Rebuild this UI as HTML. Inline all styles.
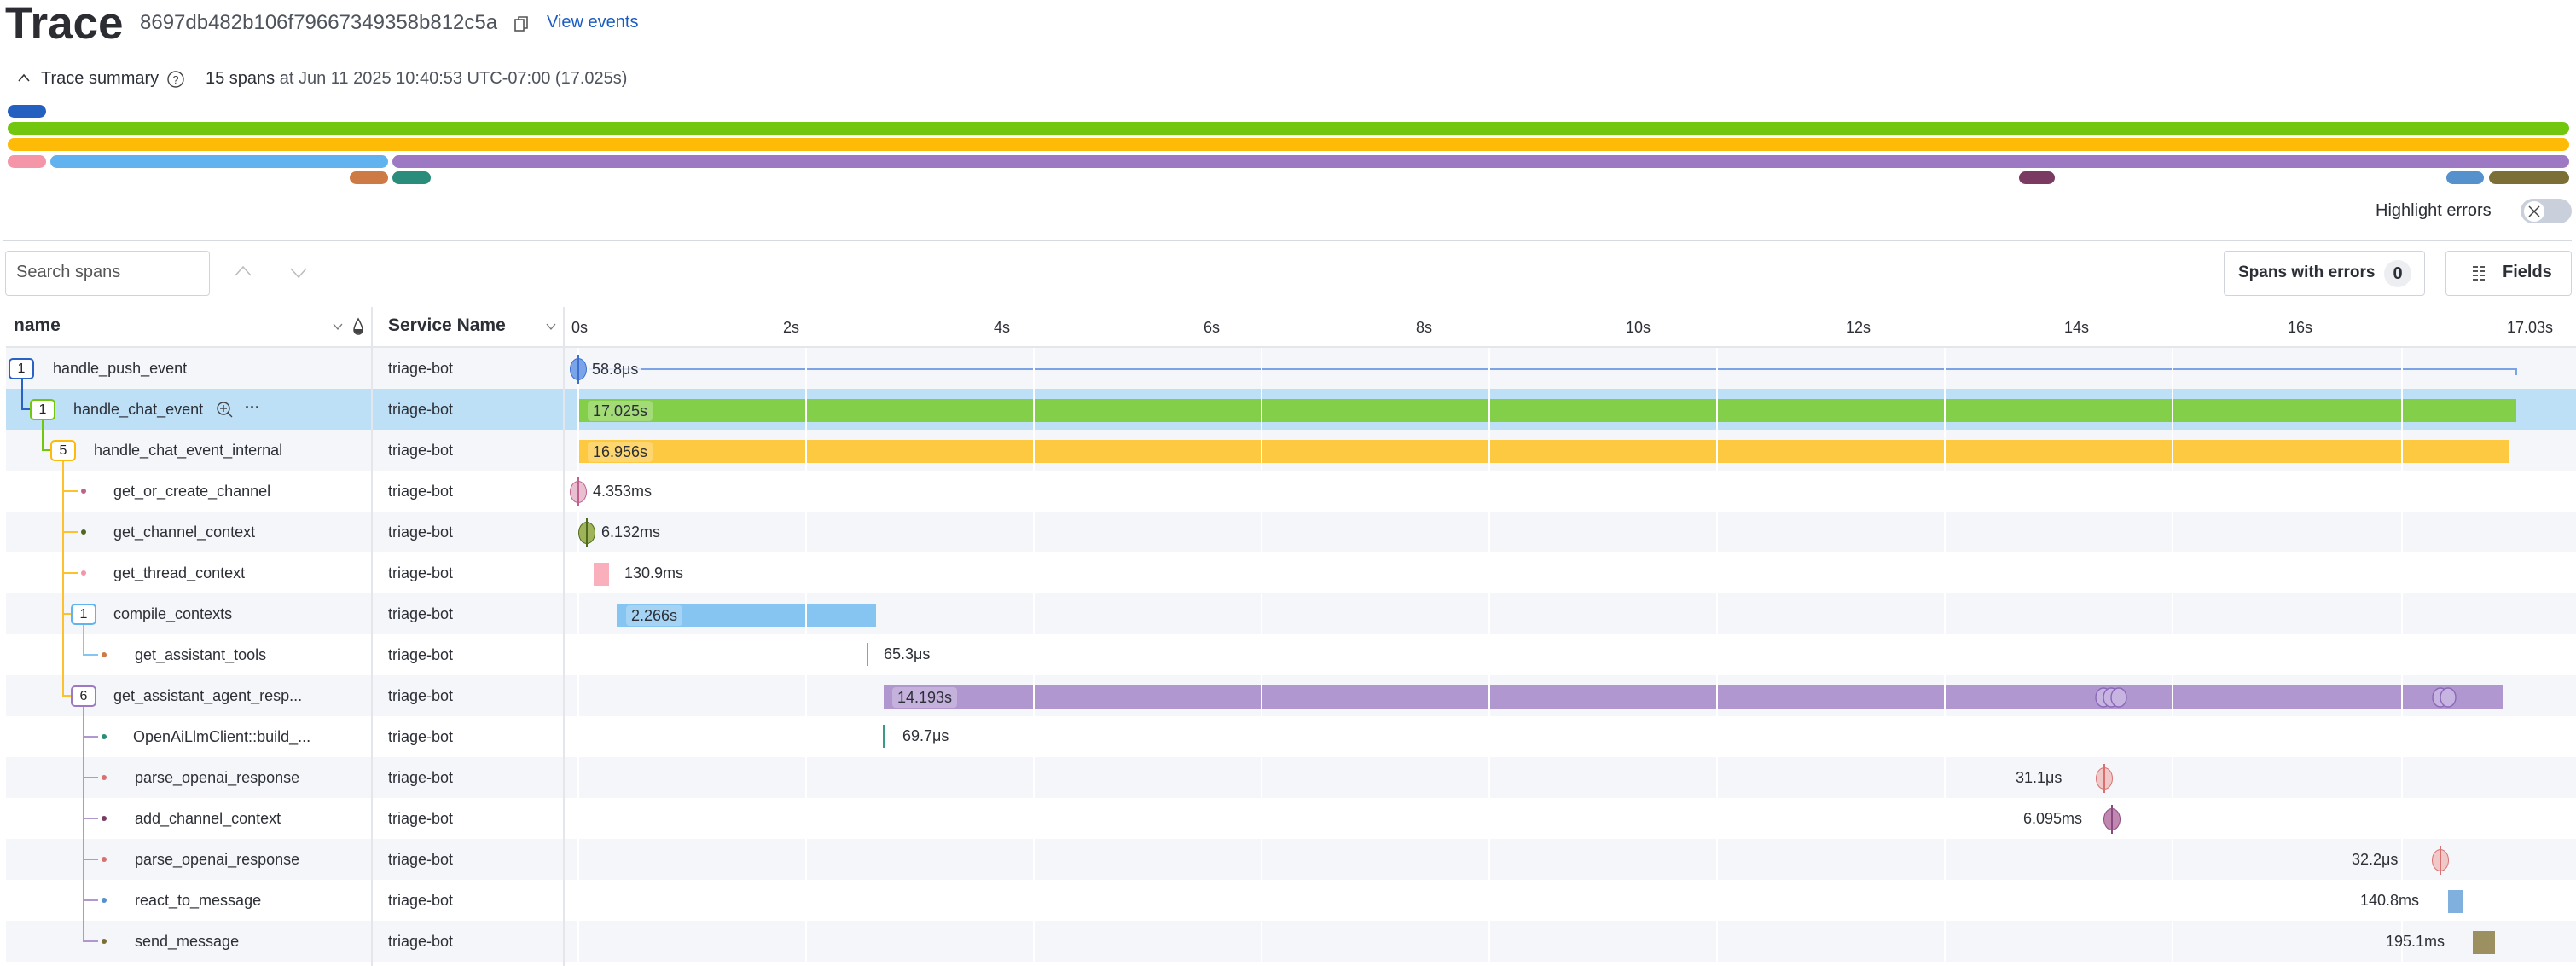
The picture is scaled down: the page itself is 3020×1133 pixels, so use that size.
<!DOCTYPE html>
<html><head><meta charset="utf-8"><style>
*{margin:0;padding:0;box-sizing:border-box}
body{width:3020px;height:1133px;overflow:hidden;background:#fff;font-family:"Liberation Sans",sans-serif;color:#2c2f36;position:relative}
.a{position:absolute;white-space:nowrap}
.mm{position:absolute;height:15px;border-radius:8px}
.row{position:absolute;left:7px;width:3013px;height:48px}
.g{background:#f5f6fa}
.sel{background:#bde0f7}
.t{position:absolute;font-size:18px;line-height:48px;white-space:nowrap;color:#2c2f36}
.badge{position:absolute;width:30px;height:25px;border:2px solid;border-radius:5px;background:#fff;font-size:16px;text-align:center;line-height:21px;color:#222}
.vl{position:absolute;width:2px}
.hl{position:absolute;height:2px}
.dot{position:absolute;width:6px;height:6px;border-radius:3px}
.bar{position:absolute;height:27px}
.bl{position:absolute;font-size:18px;line-height:24px;padding:0 6px;border-radius:4px;background:rgba(255,255,255,.25);color:#2c2f36}
.lab{position:absolute;font-size:18px;line-height:24px;color:#2c2f36;white-space:nowrap}
.mk{position:absolute;width:20px;height:26px;border-radius:50%;border:1.5px solid}
.mk:after{content:"";position:absolute;left:8px;top:-5px;width:1.5px;height:34px;background:var(--c)}
.grid{position:absolute;top:408px;width:1.5px;height:725px;background:#fff}
.tick{position:absolute;top:372px;font-size:18px;line-height:24px}
</style></head><body>

<div class="a" style="left:6px;top:-2px;font-size:53px;font-weight:bold;line-height:60px;color:#2b2d33">Trace</div>
<div class="a" style="left:164px;top:13px;font-size:24px;color:#4e535c">8697db482b106f79667349358b812c5a</div>
<svg class="a" style="left:600px;top:17px" width="22" height="22" viewBox="0 0 22 22"><rect x="4" y="6" width="10" height="13" fill="none" stroke="#555" stroke-width="1.6"/><path d="M8 6V3h10v13h-4" fill="none" stroke="#555" stroke-width="1.6"/></svg>
<div class="a" style="left:641px;top:15px;font-size:20px;color:#1a5cc2">View events</div>

<svg class="a" style="left:20px;top:85px" width="16" height="12"><path d="M2 10L8 3l6 7" fill="none" stroke="#333" stroke-width="1.6"/></svg>
<div class="a" style="left:48px;top:81px;font-size:20px;color:#2c2f36">Trace summary</div>
<svg class="a" style="left:195px;top:82px" width="22" height="22"><circle cx="11" cy="11" r="9" fill="none" stroke="#444" stroke-width="1.4"/><text x="11" y="16" font-size="13" text-anchor="middle" fill="#444" font-family="Liberation Sans">?</text></svg>
<div class="a" style="left:241px;top:81px;font-size:20px;color:#2c2f36">15 spans <span style="color:#4e535c">at Jun 11 2025 10:40:53 UTC-07:00 (17.025s)</span></div>

<div class="mm" style="left:9px;top:123px;width:45px;background:#2360c0"></div>
<div class="mm" style="left:9px;top:143px;width:3003px;background:#72c70e"></div>
<div class="mm" style="left:9px;top:162px;width:3003px;background:#fdba06"></div>
<div class="mm" style="left:9px;top:182px;width:45px;background:#f595a8"></div>
<div class="mm" style="left:59px;top:182px;width:396px;background:#60b3ee"></div>
<div class="mm" style="left:460px;top:182px;width:2552px;background:#9d78c3"></div>
<div class="mm" style="left:410px;top:201px;width:45px;background:#cd7a44"></div>
<div class="mm" style="left:460px;top:201px;width:45px;background:#2a8c7a"></div>
<div class="mm" style="left:2367px;top:201px;width:42px;background:#7a3a62"></div>
<div class="mm" style="left:2868px;top:201px;width:44px;background:#5591cd"></div>
<div class="mm" style="left:2918px;top:201px;width:94px;background:#7c6f35"></div>

<div class="a" style="left:2785px;top:236px;font-size:20px;color:#2c2f36">Highlight errors</div>
<div class="a" style="left:2955px;top:233px;width:60px;height:29px;border-radius:15px;background:#c9d0dc"></div>
<div class="a" style="left:2959px;top:236px;width:24px;height:24px;border-radius:12px;background:#fff"></div>
<svg class="a" style="left:2963px;top:240px" width="16" height="16"><path d="M2 2l12 12M14 2L2 14" stroke="#444" stroke-width="1.5"/></svg>

<div class="a" style="left:3px;top:281px;width:3012px;height:2px;background:#d5d9e0"></div>

<div class="a" style="left:6px;top:294px;width:240px;height:53px;border:1.5px solid #cfd4dc;border-radius:4px"></div>
<div class="a" style="left:19px;top:308px;font-size:20px;color:#555">Search spans</div>
<svg class="a" style="left:274px;top:310px" width="22" height="16"><path d="M2 13L11 3l9 10" fill="none" stroke="#bbb" stroke-width="1.5"/></svg>
<svg class="a" style="left:339px;top:312px" width="22" height="16"><path d="M2 3l9 10 9-10" fill="none" stroke="#bbb" stroke-width="1.5"/></svg>

<div class="a" style="left:2607px;top:294px;width:236px;height:53px;border:1.5px solid #cfd4dc;border-radius:4px"></div>
<div class="a" style="left:2624px;top:309px;font-size:19px;font-weight:bold;color:#2c2f36">Spans with errors</div>
<div class="a" style="left:2795px;top:305px;width:32px;height:32px;border-radius:16px;background:#eceef2;font-size:20px;font-weight:bold;text-align:center;line-height:32px">0</div>
<div class="a" style="left:2867px;top:294px;width:148px;height:53px;border:1.5px solid #cfd4dc;border-radius:4px"></div>
<svg class="a" style="left:2898px;top:311px" width="18" height="20"><path d="M1 2h16M1 7h16M1 12h16M1 17h16" stroke="#555" stroke-width="2" stroke-dasharray="6 2"/></svg>
<div class="a" style="left:2934px;top:308px;font-size:20px;font-weight:bold;color:#2c2f36">Fields</div>

<!-- header -->
<div class="a" style="left:16px;top:370px;font-size:21px;font-weight:bold;color:#2c2f36">name</div>
<svg class="a" style="left:390px;top:378px" width="12" height="10"><path d="M1 2l5 6 5-6" fill="none" stroke="#777" stroke-width="1.3"/></svg>
<svg class="a" style="left:413px;top:372px" width="14" height="22"><path d="M7 2C3 9 2 12 2 15a5 5 0 0 0 10 0c0-3-1-6-5-13z" fill="none" stroke="#444" stroke-width="1.5"/><path d="M2 14h10a5 5 0 0 1-10 0z" fill="#444"/></svg>
<div class="a" style="left:435px;top:360px;width:1.5px;height:773px;background:#e3e6ea"></div>
<div class="a" style="left:455px;top:370px;font-size:21px;font-weight:bold;color:#2c2f36">Service Name</div>
<svg class="a" style="left:640px;top:378px" width="12" height="10"><path d="M1 2l5 6 5-6" fill="none" stroke="#777" stroke-width="1.3"/></svg>
<div class="a" style="left:660px;top:360px;width:1.5px;height:773px;background:#e3e6ea"></div>
<div class="tick" style="left:670px">0s</div>
<div class="tick" style="left:918px">2s</div>
<div class="tick" style="left:1165px">4s</div>
<div class="tick" style="left:1411px">6s</div>
<div class="tick" style="left:1660px">8s</div>
<div class="tick" style="left:1906px">10s</div>
<div class="tick" style="left:2164px">12s</div>
<div class="tick" style="left:2420px">14s</div>
<div class="tick" style="left:2682px">16s</div>
<div class="tick" style="left:2939px">17.03s</div>
<div class="a" style="left:7px;top:406px;width:3013px;height:2px;background:#e3e6ea"></div>

<!-- rows -->
<div class="row g" style="top:408px"></div>
<div class="row sel" style="top:456px"></div>
<div class="row g" style="top:504px"></div>
<div class="row" style="top:552px"></div>
<div class="row g" style="top:600px"></div>
<div class="row" style="top:648px"></div>
<div class="row g" style="top:696px"></div>
<div class="row" style="top:744px"></div>
<div class="row g" style="top:792px"></div>
<div class="row" style="top:840px"></div>
<div class="row g" style="top:888px"></div>
<div class="row" style="top:936px"></div>
<div class="row g" style="top:984px"></div>
<div class="row" style="top:1032px"></div>
<div class="row g" style="top:1080px"></div>
<div class="a" style="left:435px;top:408px;width:1.5px;height:725px;background:#e3e6ea"></div>
<div class="a" style="left:660px;top:408px;width:1.5px;height:725px;background:#e3e6ea"></div>

<!-- tree lines -->
<div class="vl" style="left:25px;top:445px;height:35px;background:#2a62c4"></div>
<div class="hl" style="left:25px;top:479px;width:12px;background:#2a62c4"></div>
<div class="vl" style="left:49px;top:493px;height:35px;background:#72c70e"></div>
<div class="hl" style="left:49px;top:527px;width:12px;background:#72c70e"></div>
<div class="vl" style="left:73px;top:541px;height:276px;background:#fdc12e"></div>
<div class="hl" style="left:73px;top:575px;width:18px;background:#fdc12e"></div>
<div class="hl" style="left:73px;top:623px;width:18px;background:#fdc12e"></div>
<div class="hl" style="left:73px;top:671px;width:18px;background:#fdc12e"></div>
<div class="hl" style="left:73px;top:719px;width:12px;background:#fdc12e"></div>
<div class="hl" style="left:73px;top:815px;width:12px;background:#fdc12e"></div>
<div class="vl" style="left:97px;top:733px;height:36px;background:#86c5f1"></div>
<div class="hl" style="left:97px;top:767px;width:18px;background:#86c5f1"></div>
<div class="vl" style="left:97px;top:829px;height:276px;background:#b097d0"></div>
<div class="hl" style="left:97px;top:863px;width:18px;background:#b097d0"></div>
<div class="hl" style="left:97px;top:911px;width:18px;background:#b097d0"></div>
<div class="hl" style="left:97px;top:959px;width:18px;background:#b097d0"></div>
<div class="hl" style="left:97px;top:1007px;width:18px;background:#b097d0"></div>
<div class="hl" style="left:97px;top:1055px;width:18px;background:#b097d0"></div>
<div class="hl" style="left:97px;top:1103px;width:18px;background:#b097d0"></div>

<div class="dot" style="left:95px;top:573px;background:#c06090"></div>
<div class="dot" style="left:95px;top:621px;background:#4e6a1c"></div>
<div class="dot" style="left:95px;top:669px;background:#f595a8"></div>
<div class="dot" style="left:119px;top:765px;background:#cd7a44"></div>
<div class="dot" style="left:119px;top:861px;background:#2a8c7a"></div>
<div class="dot" style="left:119px;top:909px;background:#d87070"></div>
<div class="dot" style="left:119px;top:957px;background:#7a3a62"></div>
<div class="dot" style="left:119px;top:1005px;background:#d87070"></div>
<div class="dot" style="left:119px;top:1053px;background:#5591cd"></div>
<div class="dot" style="left:119px;top:1101px;background:#7c6f35"></div>

<div class="badge" style="left:10px;top:420px;border-color:#2a62c4">1</div>
<div class="badge" style="left:35px;top:468px;border-color:#72c70e">1</div>
<div class="badge" style="left:59px;top:516px;border-color:#fdba06">5</div>
<div class="badge" style="left:83px;top:708px;border-color:#60b3ee">1</div>
<div class="badge" style="left:83px;top:804px;border-color:#9d78c3">6</div>

<div class="t" style="left:62px;top:408px">handle_push_event</div>
<div class="t" style="left:86px;top:456px">handle_chat_event</div>
<svg class="a" style="left:253px;top:470px" width="22" height="22"><circle cx="9" cy="9" r="7" fill="none" stroke="#444" stroke-width="1.4"/><path d="M9 5v8M5 9h8M14 14l5 5" stroke="#444" stroke-width="1.4"/></svg>
<div class="a" style="left:287px;top:468px;font-size:18px;font-weight:bold;color:#444">···</div>
<div class="t" style="left:110px;top:504px">handle_chat_event_internal</div>
<div class="t" style="left:133px;top:552px">get_or_create_channel</div>
<div class="t" style="left:133px;top:600px">get_channel_context</div>
<div class="t" style="left:133px;top:648px">get_thread_context</div>
<div class="t" style="left:133px;top:696px">compile_contexts</div>
<div class="t" style="left:158px;top:744px">get_assistant_tools</div>
<div class="t" style="left:133px;top:792px">get_assistant_agent_resp...</div>
<div class="t" style="left:156px;top:840px">OpenAiLlmClient::build_...</div>
<div class="t" style="left:158px;top:888px">parse_openai_response</div>
<div class="t" style="left:158px;top:936px">add_channel_context</div>
<div class="t" style="left:158px;top:984px">parse_openai_response</div>
<div class="t" style="left:158px;top:1032px">react_to_message</div>
<div class="t" style="left:158px;top:1080px">send_message</div>

<div class="t" style="left:455px;top:408px">triage-bot</div>
<div class="t" style="left:455px;top:456px">triage-bot</div>
<div class="t" style="left:455px;top:504px">triage-bot</div>
<div class="t" style="left:455px;top:552px">triage-bot</div>
<div class="t" style="left:455px;top:600px">triage-bot</div>
<div class="t" style="left:455px;top:648px">triage-bot</div>
<div class="t" style="left:455px;top:696px">triage-bot</div>
<div class="t" style="left:455px;top:744px">triage-bot</div>
<div class="t" style="left:455px;top:792px">triage-bot</div>
<div class="t" style="left:455px;top:840px">triage-bot</div>
<div class="t" style="left:455px;top:888px">triage-bot</div>
<div class="t" style="left:455px;top:936px">triage-bot</div>
<div class="t" style="left:455px;top:984px">triage-bot</div>
<div class="t" style="left:455px;top:1032px">triage-bot</div>
<div class="t" style="left:455px;top:1080px">triage-bot</div>

<!-- timeline bars -->
<div class="a" style="left:690px;top:432px;width:2260px;height:2px;background:#7ba3e6"></div>
<div class="a" style="left:2949px;top:432px;width:2px;height:8px;background:#7ba3e6"></div>
<div class="bar" style="left:678px;top:468px;width:2272px;background:#84cf4a"></div>
<div class="bar" style="left:678px;top:516px;width:2263px;background:#fcc940"></div>
<div class="bar" style="left:696px;top:660px;width:18px;background:#f9b0bc"></div>
<div class="bar" style="left:723px;top:708px;width:304px;background:#86c5f1"></div>
<div class="a" style="left:1016px;top:754px;width:2px;height:27px;background:#d88a5a"></div>
<div class="bar" style="left:1036px;top:804px;width:1898px;background:#b097d0"></div>
<div class="a" style="left:1035px;top:850px;width:2px;height:27px;background:#3a9a86"></div>
<div class="bar" style="left:2870px;top:1044px;width:18px;background:#80b0de"></div>
<div class="bar" style="left:2899px;top:1092px;width:26px;background:#9c9060"></div>

<div class="grid" style="left:677px"></div>
<div class="grid" style="left:944px"></div>
<div class="grid" style="left:1211px"></div>
<div class="grid" style="left:1478px"></div>
<div class="grid" style="left:1745px"></div>
<div class="grid" style="left:2012px"></div>
<div class="grid" style="left:2279px"></div>
<div class="grid" style="left:2546px"></div>
<div class="grid" style="left:2815px"></div>

<div class="mk" style="--c:#3d6fd0;left:668px;top:420px;background:#7aa3e8;border-color:#3d6fd0"></div>
<div class="mk" style="--c:#c06090;left:668px;top:564px;background:#e8c0d0;border-color:#c06090"></div>
<div class="mk" style="--c:#4e6a1c;left:678px;top:612px;background:#9fb35a;border-color:#4e6a1c"></div>
<div class="mk" style="--c:#d87070;left:2457px;top:900px;background:#f0c8c8;border-color:#d87070"></div>
<div class="mk" style="--c:#8a4a80;left:2466px;top:948px;background:#c088b0;border-color:#8a4a80"></div>
<div class="mk" style="--c:#d87070;left:2851px;top:996px;background:#f0c8c8;border-color:#d87070"></div>
<svg class="a" style="left:2455px;top:805px" width="45" height="26"><g fill="#c8b4e0" stroke="#8a68b8" stroke-width="1.4"><ellipse cx="11" cy="13" rx="9" ry="11"/><ellipse cx="20" cy="13" rx="9" ry="11"/><ellipse cx="29" cy="13" rx="9" ry="11"/></g></svg>
<svg class="a" style="left:2850px;top:805px" width="35" height="26"><g fill="#c8b4e0" stroke="#8a68b8" stroke-width="1.4"><ellipse cx="11" cy="13" rx="9" ry="11"/><ellipse cx="20" cy="13" rx="9" ry="11"/></g></svg>

<div class="lab" style="left:690px;top:421px;background:rgba(245,246,250,.85);padding:0 4px">58.8μs</div>
<div class="bl" style="left:689px;top:470px">17.025s</div>
<div class="bl" style="left:689px;top:518px">16.956s</div>
<div class="lab" style="left:695px;top:564px">4.353ms</div>
<div class="lab" style="left:705px;top:612px">6.132ms</div>
<div class="lab" style="left:732px;top:660px">130.9ms</div>
<div class="bl" style="left:734px;top:710px">2.266s</div>
<div class="lab" style="left:1036px;top:755px">65.3μs</div>
<div class="bl" style="left:1046px;top:806px">14.193s</div>
<div class="lab" style="left:1058px;top:851px">69.7μs</div>
<div class="lab" style="left:2363px;top:900px">31.1μs</div>
<div class="lab" style="left:2372px;top:948px">6.095ms</div>
<div class="lab" style="left:2757px;top:996px">32.2μs</div>
<div class="lab" style="left:2767px;top:1044px">140.8ms</div>
<div class="lab" style="left:2797px;top:1092px">195.1ms</div>
</body></html>
